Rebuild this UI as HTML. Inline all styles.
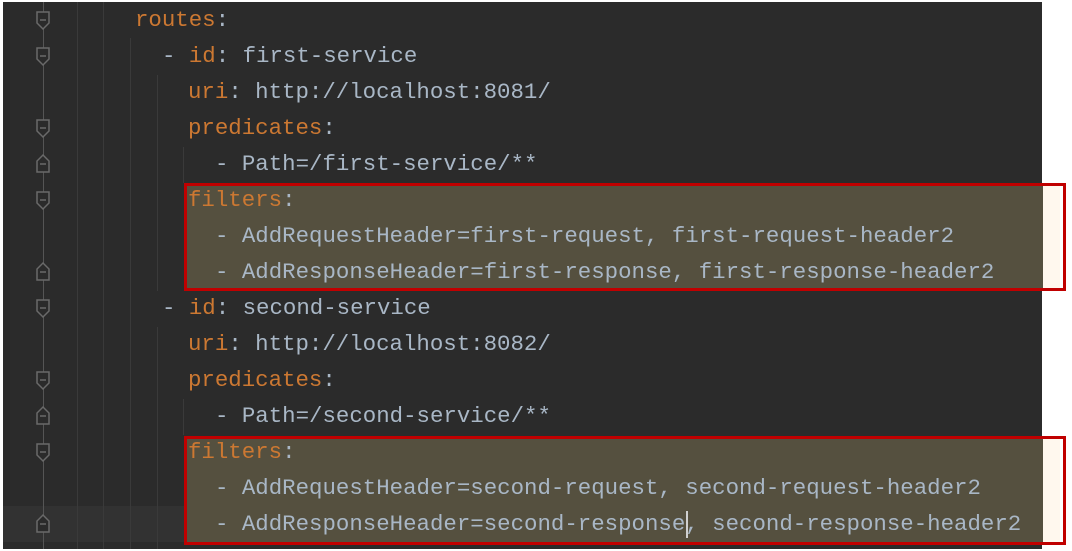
<!DOCTYPE html>
<html><head><meta charset="utf-8"><style>
body{margin:0;width:1072px;height:551px;background:#fff;position:relative;overflow:hidden}
#ed{position:absolute;left:3px;top:2px;width:1039px;height:547px;background:#2b2b2b}
.cur{position:absolute;left:3px;top:506px;width:1039px;height:36px;background:#323232}
.l{position:absolute;left:0;height:36px;line-height:36px;font-family:"Liberation Mono",monospace;font-size:22.4px;color:#a9b7c6;white-space:pre}
.k{color:#cc7832}
.hl{position:absolute;left:187px;background:#55503f}
.box{position:absolute;left:184px;width:876px;border:3px solid #c00000;box-sizing:content-box}
.cream{position:absolute;left:1043px;width:17px;background:#fff8ee}
.g{position:absolute;width:1px;background:#3a3a3a}
.fold{position:absolute;left:36px;width:13px;height:18px}
</style></head><body>
<div id="ed"></div>
<div class="cur"></div>
<div class="g" style="left:43px;top:2px;height:547px;background:#555"></div>
<div class="g" style="left:77px;top:2px;height:547px"></div>
<div class="g" style="left:103px;top:2px;height:547px"></div>
<div class="g" style="left:130px;top:38px;height:511px"></div>
<div class="g" style="left:157px;top:75px;height:216px"></div>
<div class="g" style="left:157px;top:327px;height:222px"></div>
<div class="g" style="left:183px;top:147px;height:36px"></div>
<div class="g" style="left:183px;top:399px;height:36px"></div>
<div class="hl" style="top:186px;width:856px;height:102px"></div>
<div class="hl" style="top:439px;width:856px;height:103px"></div>
<div class="cream" style="top:186px;height:102px"></div>
<div class="cream" style="top:439px;height:103px"></div>
<div class="box" style="top:183px;height:102px"></div>
<div class="box" style="top:436px;height:103px"></div>
<svg style="position:absolute;left:0;top:0" width="60" height="551">
<g fill="#2b2b2b" stroke="#6a6a6a" stroke-width="1.5">
<path d="M37 12h12v11l-6 6l-6-6z"/><path d="M37 48h12v11l-6 6l-6-6z"/><path d="M37 120h12v11l-6 6l-6-6z"/><path d="M37 192h12v11l-6 6l-6-6z"/><path d="M37 300h12v11l-6 6l-6-6z"/><path d="M37 372h12v11l-6 6l-6-6z"/><path d="M37 444h12v11l-6 6l-6-6z"/>
<path d="M37 172h12v-11l-6-6l-6 6z"/><path d="M37 280h12v-11l-6-6l-6 6z"/><path d="M37 424h12v-11l-6-6l-6 6z"/><path d="M37 532h12v-11l-6-6l-6 6z"/>
</g>
<g stroke="#6a6a6a" stroke-width="1.5"><path d="M40 20h6M40 56h6M40 128h6M40 200h6M40 308h6M40 380h6M40 452h6M40 164h6M40 272h6M40 416h6M40 524h6"/></g>
</svg>
<div class="l" style="top:2px;left:135px"><span class="k">routes</span>:</div>
<div class="l" style="top:38px;left:162px">- <span class="k">id</span>: first-service</div>
<div class="l" style="top:74px;left:188px"><span class="k">uri</span>: http://localhost:8081/</div>
<div class="l" style="top:110px;left:188px"><span class="k">predicates</span>:</div>
<div class="l" style="top:146px;left:215px">- Path=/first-service/**</div>
<div class="l" style="top:182px;left:188px"><span class="k">filters</span>:</div>
<div class="l" style="top:218px;left:215px">- AddRequestHeader=first-request, first-request-header2</div>
<div class="l" style="top:254px;left:215px">- AddResponseHeader=first-response, first-response-header2</div>
<div class="l" style="top:290px;left:162px">- <span class="k">id</span>: second-service</div>
<div class="l" style="top:326px;left:188px"><span class="k">uri</span>: http://localhost:8082/</div>
<div class="l" style="top:362px;left:188px"><span class="k">predicates</span>:</div>
<div class="l" style="top:398px;left:215px">- Path=/second-service/**</div>
<div class="l" style="top:434px;left:188px"><span class="k">filters</span>:</div>
<div class="l" style="top:470px;left:215px">- AddRequestHeader=second-request, second-request-header2</div>
<div class="l" style="top:506px;left:215px">- AddResponseHeader=second-response, second-response-header2</div>
<div style="position:absolute;left:686px;top:511px;width:2px;height:27px;background:#d0d0d0"></div>
</body></html>
